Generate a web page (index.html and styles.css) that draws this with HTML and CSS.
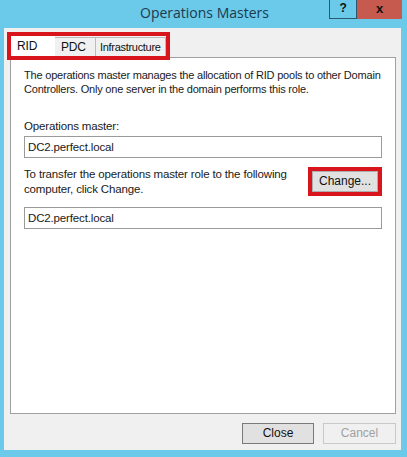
FILE: index.html
```html
<!DOCTYPE html>
<html>
<head>
<meta charset="utf-8">
<link rel="stylesheet" href="styles.css">
</head>
<body>
<div class="window">
  <div class="titlebar">
    <div class="title">Operations Masters</div>
    <div class="caption-buttons">
      <div class="cap-help">?</div>
      <div class="cap-close">x</div>
    </div>
  </div>
  <div class="body">
    <div class="tabs-wrap">
      <div class="tabs">
        <div class="tab active">RID</div>
        <div class="tab">PDC</div>
        <div class="tab">Infrastructure</div>
      </div>
    </div>
    <div class="panel">
      <p class="desc">The operations master manages the allocation of RID pools to other Domain Controllers. Only one server in the domain performs this role.</p>
      <div class="label">Operations master:</div>
      <div class="textbox">DC2.perfect.local</div>
      <div class="transfer">
        <div class="transfer-text">To transfer the operations master role to the following computer, click Change.</div>
        <div class="hl-btn"><div class="btn change">Change...</div></div>
      </div>
      <div class="textbox">DC2.perfect.local</div>
    </div>
    <div class="footer">
      <div class="btn close">Close</div>
      <div class="btn cancel">Cancel</div>
    </div>
  </div>
</div>
</body>
</html>
```

FILE: styles.css
```css
html, body {
  margin: 0;
  padding: 0;
}
body {
  width: 407px;
  height: 457px;
  background: #6bc9e9;
  font-family: "Liberation Sans", Arial, sans-serif;
  font-size: 11.5px;
  letter-spacing: -0.15px;
  color: #1a1a1a;
  overflow: hidden;
}
.window {
  width: 407px;
  height: 457px;
  display: flex;
  flex-direction: column;
}
.titlebar {
  height: 28px;
  position: relative;
  display: flex;
  justify-content: center;
}
.title {
  font-family: "Open Sans", sans-serif;
  font-size: 14px;
  letter-spacing: 0;
  color: #1d3a4e;
  line-height: 26px;
  padding-left: 2px;
}
.caption-buttons {
  position: absolute;
  top: 0;
  right: 5px;
  display: flex;
}
.cap-help {
  width: 28px;
  height: 19px;
  border: 1px solid #2a5a70;
  border-top: none;
  box-sizing: border-box;
  text-align: center;
  font-weight: bold;
  font-size: 12px;
  line-height: 17px;
  color: #111;
}
.cap-close {
  width: 45px;
  height: 19px;
  background: #c75a4e;
  text-align: center;
  font-weight: bold;
  font-size: 13px;
  line-height: 17px;
  color: #111;
}
.body {
  margin: 0 6px 7px 4px;
  flex: 1;
  background: #f0f0f0;
  display: flex;
  flex-direction: column;
  padding: 4px 5px 0 6px;
}
.tabs-wrap {
  display: flex;
}
.tabs {
  display: flex;
  align-items: flex-end;
  border: 4px solid #d8141c;
  margin-left: -3px;
  height: 20px;
  position: relative;
  z-index: 1;
  margin-bottom: -3px;
}
.tab {
  height: 19px;
  line-height: 18px;
  padding: 0 4px;
  background: #f0f0f0;
  border: 1px solid #bcbcbc;
  border-bottom: none;
  border-left: none;
  box-sizing: border-box;
  color: #111;
  font-size: 12px;
}
.tab.active {
  height: 20px;
  background: #fff;
  width: 44px;
  padding-left: 6px;
  border-color: #fff;
}
.tab:nth-child(2) {
  width: 41px;
  padding-left: 6px;
}
.tab:nth-child(3) {
  width: 70px;
  font-size: 11px;
  letter-spacing: -0.3px;
}
.panel {
  background: #fff;
  border: 1px solid #a0a0a0;
  height: 357px;
  box-sizing: border-box;
  padding: 7px 13px 0 13px;
  width: 386px;
}
.desc {
  margin: 0;
  line-height: 14px;
  padding-top: 3px;
  width: 362px;
  font-size: 11px;
  letter-spacing: -0.2px;
}
.label {
  margin-top: 23px;
  line-height: 14px;
}
.textbox {
  margin-top: 3px;
  height: 22px;
  border: 1px solid #9a9a9a;
  box-sizing: border-box;
  line-height: 20px;
  padding-left: 3px;
  width: 358px;
}
.transfer {
  display: flex;
  justify-content: space-between;
  align-items: flex-start;
  margin-top: 9px;
}
.transfer-text {
  width: 270px;
  line-height: 15px;
}
.hl-btn {
  border: 4px solid #d8141c;
}
.btn {
  background: #e1e1e1;
  border: 1px solid #adadad;
  box-sizing: border-box;
  text-align: center;
  color: #111;
  font-size: 12px;
  letter-spacing: 0;
}
.change {
  width: 66px;
  height: 21px;
  line-height: 19px;
}
.transfer + .textbox {
  margin-top: 10px;
}
.footer {
  display: flex;
  justify-content: flex-end;
  gap: 9px;
  padding-top: 9px;
}
.close {
  width: 72px;
  height: 21px;
  line-height: 19px;
  border-color: #7a7a7a;
}
.cancel {
  width: 73px;
  height: 21px;
  line-height: 19px;
  background: #f0f0f0;
  border-color: #c8c8c8;
  color: #a0a0a0;
}
```
